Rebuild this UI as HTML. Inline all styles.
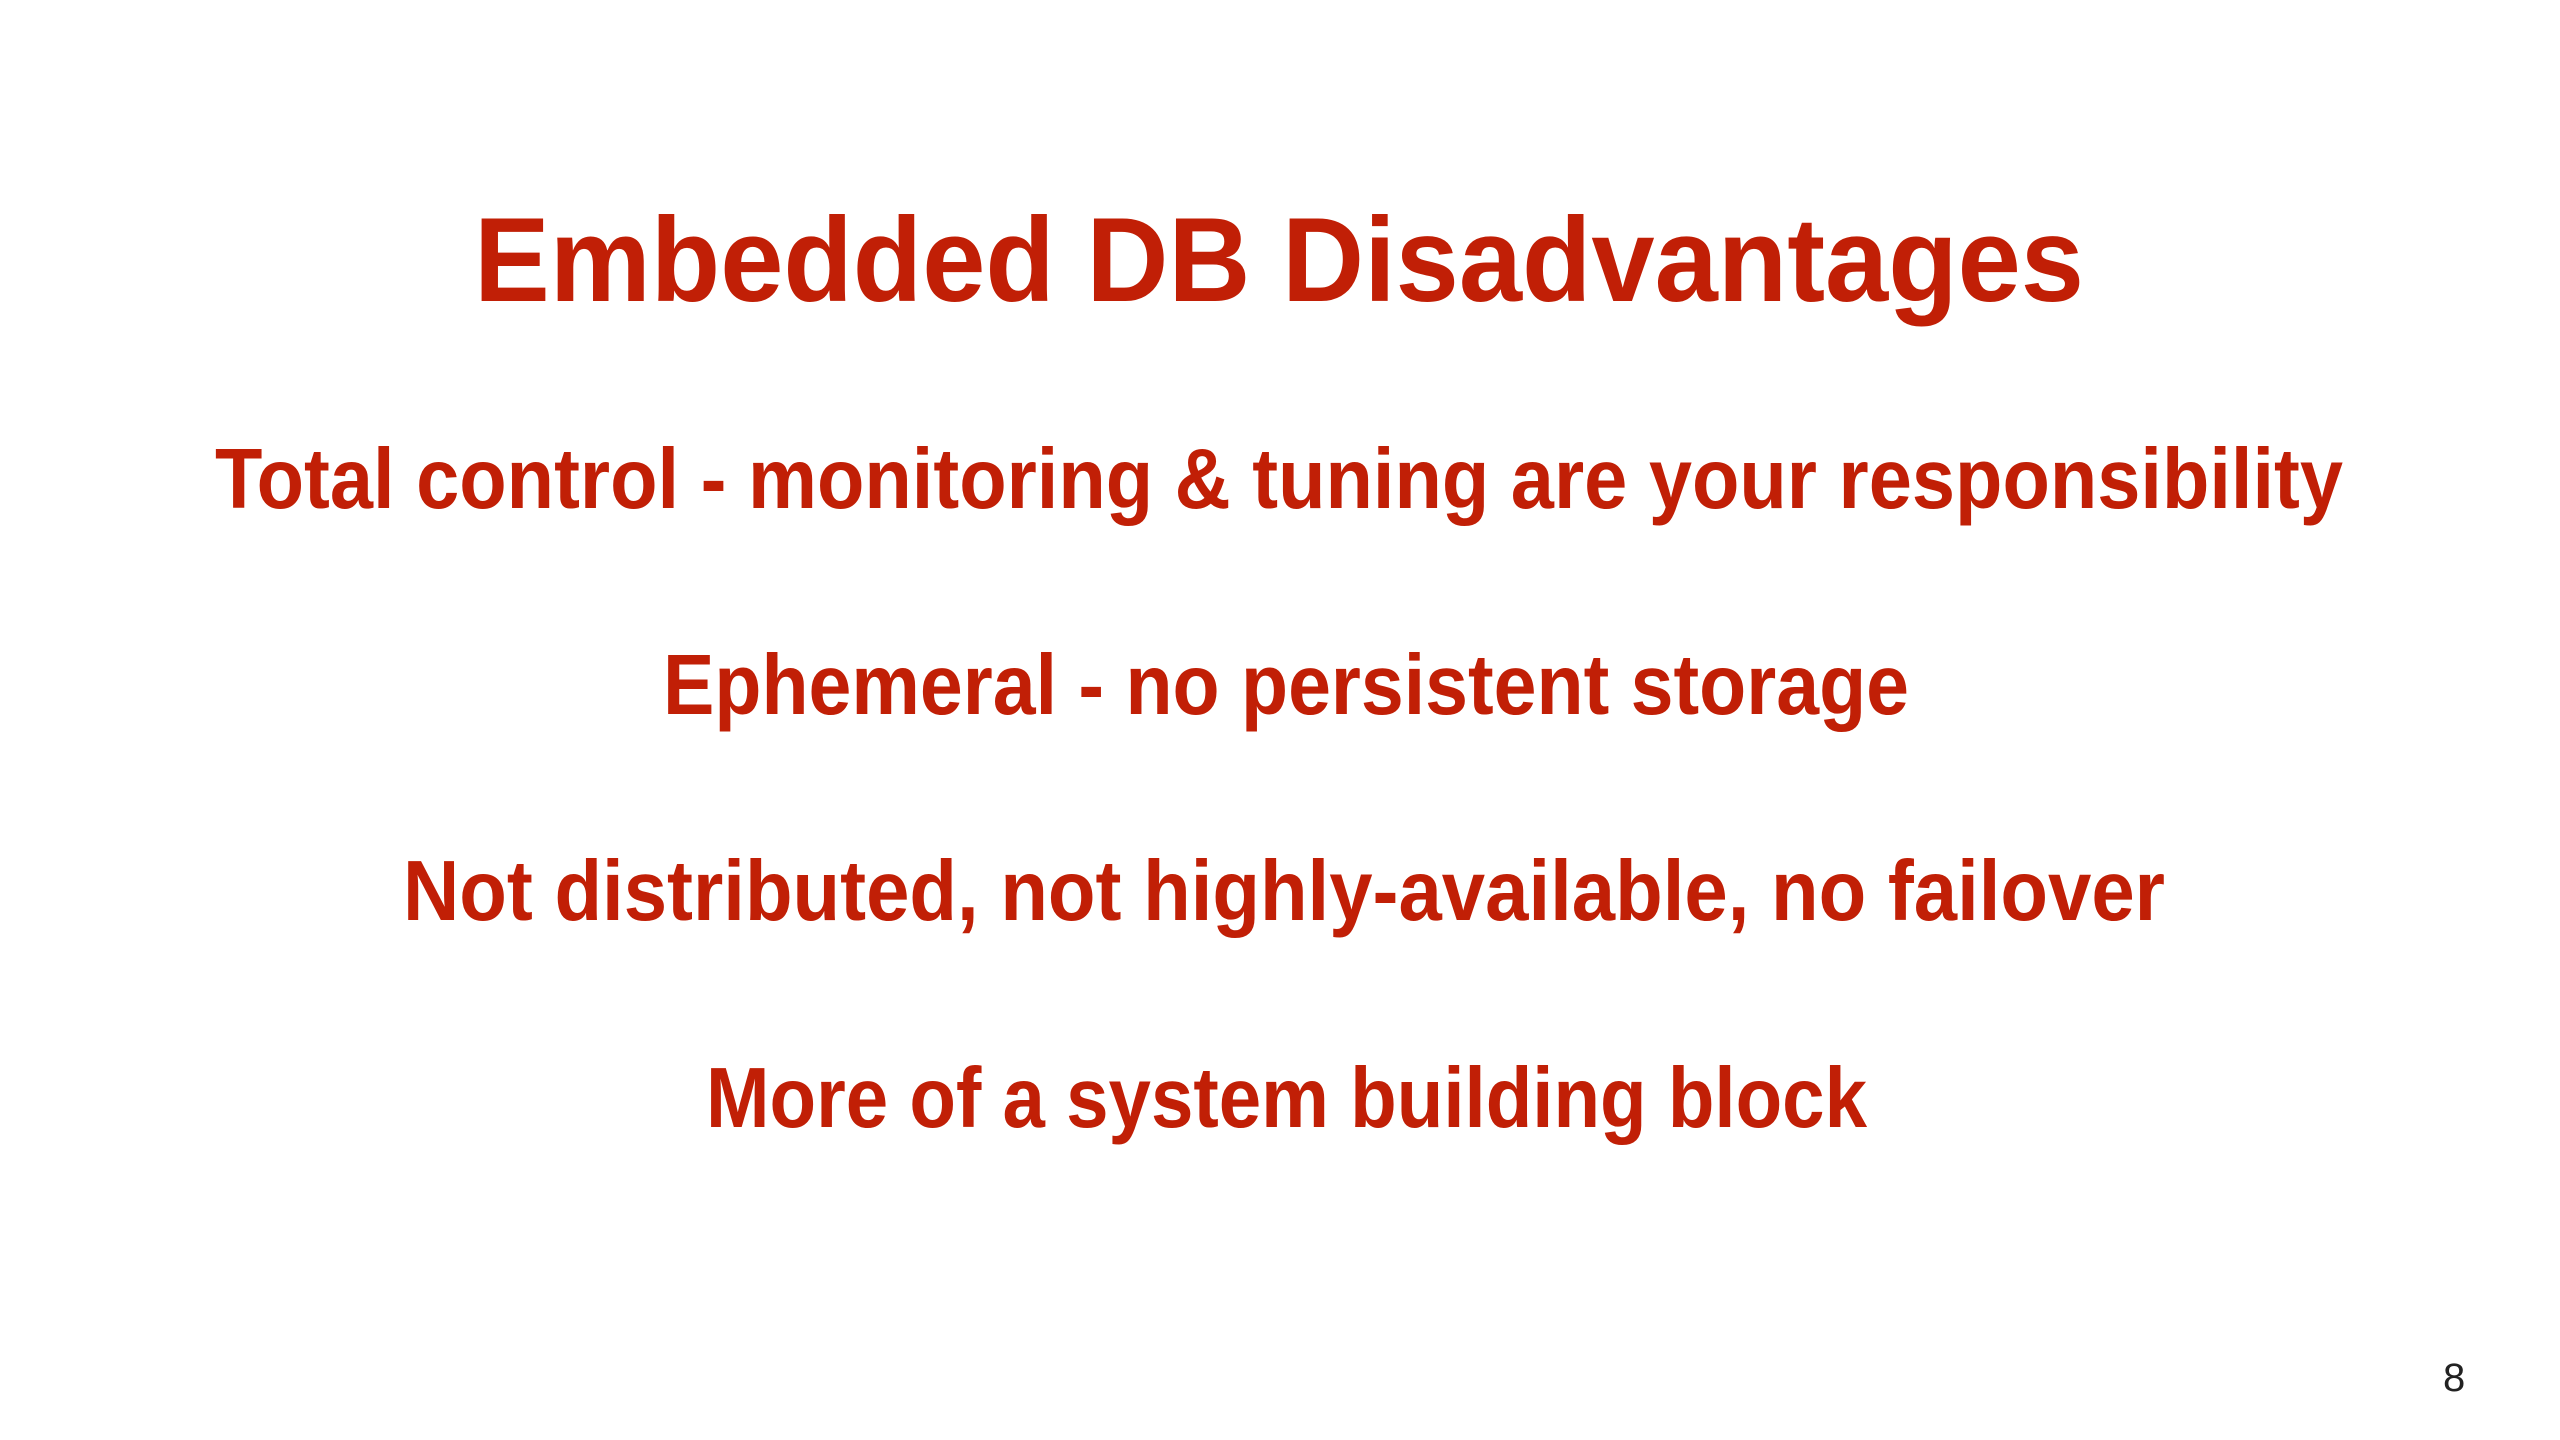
<!DOCTYPE html>
<html><head><meta charset="utf-8"><style>
html,body{margin:0;padding:0;background:#fff;}
body{width:2560px;height:1440px;position:relative;overflow:hidden;}
.t{position:absolute;white-space:nowrap;font-family:"Liberation Sans",sans-serif;font-weight:bold;color:#c11f06;line-height:1;transform-origin:0 0;}
.n{position:absolute;font-family:"Liberation Sans",sans-serif;color:#222;font-size:40px;line-height:1;left:2443px;top:1358px;}
</style></head><body>
<div class="t" id="a" style="font-size:120px;left:474px;top:200px">Embedded DB Disadvantages</div>
<div class="t" id="b" style="font-size:85px;left:215px;top:437px">Total control - monitoring &amp; tuning are your responsibility</div>
<div class="t" id="c" style="font-size:85px;left:663px;top:643px">Ephemeral - no persistent storage</div>
<div class="t" id="d" style="font-size:85px;left:403px;top:849px">Not distributed, not highly-available, no failover</div>
<div class="t" id="e" style="font-size:85px;left:706px;top:1056px">More of a system building block</div>
<div class="n">8</div>
<script>
[["a",1610],["b",2128],["c",1246],["d",1762],["e",1161]].forEach(function(p){
var el=document.getElementById(p[0]);var w=el.getBoundingClientRect().width;
el.style.transform="scaleX("+(p[1]/w)+")";});
</script>
</body></html>
